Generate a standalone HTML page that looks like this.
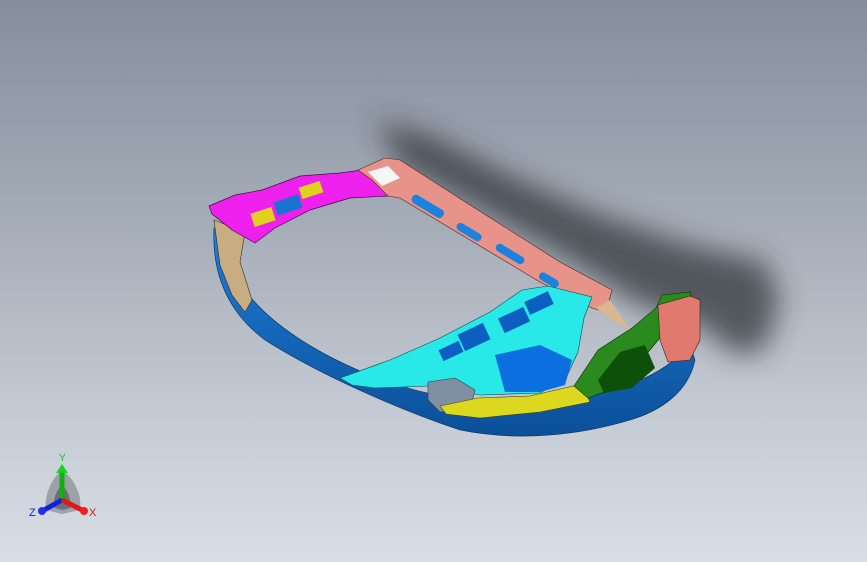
<!DOCTYPE html>
<html><head><style>
html,body{margin:0;padding:0;width:867px;height:562px;overflow:hidden}
body{background:linear-gradient(180deg,#858e9b 0%,#a5adb8 40%,#c6ccd5 75%,#d9dee5 100%)}
svg{position:absolute;left:0;top:0}
</style></head><body>
<svg width="867" height="562" viewBox="0 0 867 562">
<defs>
<filter id="b" x="-20%" y="-50%" width="140%" height="200%"><feGaussianBlur stdDeviation="14"/></filter>
<linearGradient id="bl" x1="0" y1="0" x2="0" y2="1"><stop offset="0" stop-color="#1e7fd8"/><stop offset="1" stop-color="#0b4f99"/></linearGradient>
</defs>
<g filter="url(#b)" fill="#2a2d33" opacity="0.7">
<path d="M375,120 L430,135 L520,180 L600,215 L690,245 L765,262 L780,300 L765,350 L735,355 L700,325 L640,305 L560,255 L480,210 L400,165 Z"/>
</g>
<path d="M214,228 C212,270 225,310 265,340 C320,375 400,410 460,430 C520,442 580,435 630,420 C670,408 690,385 695,360 L690,345 C660,380 600,400 540,402 C470,405 420,395 370,375 C320,355 270,325 245,290 C232,268 228,245 222,228 Z" fill="url(#bl)" stroke="#0a2a55" stroke-width="0.6"/>
<path d="M214,220 L245,232 L240,262 L252,300 L245,312 L232,295 L220,265 Z" fill="#c8ac82" stroke="#3a3020" stroke-width="0.6"/>
<path d="M209,206 L235,195 L262,190 L300,176 L340,173 L362,170 L388,186 L388,196 L350,198 L310,210 L275,228 L255,243 L232,230 L212,214 Z" fill="#ee20ee" stroke="#401040" stroke-width="0.7"/>
<rect x="275" y="198" width="26" height="14" fill="#1a73d0" transform="rotate(-18 288 205)"/>
<rect x="300" y="184" width="22" height="12" fill="#e0d020" transform="rotate(-18 311 190)"/>
<rect x="252" y="210" width="22" height="14" fill="#e0d020" transform="rotate(-18 263 217)"/>
<path d="M358,170 L385,158 L400,160 L470,205 L560,262 L612,290 L606,312 L592,308 L540,282 L470,240 L400,198 L388,196 L372,180 Z" fill="#e8938a" stroke="#4a2420" stroke-width="0.6"/>
<path d="M368,172 L388,166 L400,178 L382,186 Z" fill="#f6f6f6"/>
<rect x="410" y="202" width="36" height="9" rx="4" fill="#1a83e0" transform="rotate(31 428 206)"/>
<rect x="455" y="228" width="28" height="8" rx="4" fill="#1a83e0" transform="rotate(31 469 232)"/>
<rect x="494" y="250" width="32" height="8" rx="4" fill="#1a83e0" transform="rotate(31 510 254)"/>
<rect x="538" y="276" width="22" height="8" rx="4" fill="#1a83e0" transform="rotate(31 549 280)"/>
<path d="M340,378 L390,360 L440,338 L490,312 L522,290 L548,286 L592,297 L584,318 L578,352 L566,378 L540,393 L480,395 L430,386 L375,388 L352,385 Z" fill="#28e8e8" stroke="#104848" stroke-width="0.6"/>
<path d="M495,355 L540,345 L572,360 L565,385 L540,392 L505,392 Z" fill="#0c6fe0"/>
<rect x="460" y="328" width="28" height="18" fill="#0c5fc0" transform="rotate(-25 474 337)"/>
<rect x="500" y="312" width="28" height="16" fill="#0c5fc0" transform="rotate(-25 514 320)"/>
<rect x="526" y="296" width="26" height="14" fill="#0c5fc0" transform="rotate(-25 539 303)"/>
<rect x="440" y="345" width="22" height="12" fill="#0c5fc0" transform="rotate(-25 451 351)"/>
<path d="M428,382 L455,378 L475,390 L470,410 L440,412 L428,400 Z" fill="#8090a4" stroke="#303840" stroke-width="0.6"/>
<path d="M440,406 L478,398 L530,396 L582,384 L590,402 L540,412 L480,418 L446,414 Z" fill="#dcd820" stroke="#404010" stroke-width="0.6"/>
<path d="M574,386 L598,350 L632,328 L656,308 L662,295 L690,292 L696,312 L668,328 L650,350 L628,375 L604,392 L588,398 Z" fill="#2a8a1e" stroke="#0c3008" stroke-width="0.6"/>
<path d="M598,380 L620,352 L645,345 L655,368 L632,388 L604,393 Z" fill="#0d5008"/>
<path d="M658,305 L690,296 L700,300 L700,340 L690,360 L668,362 L660,340 Z" fill="#e07a6e" stroke="#402018" stroke-width="0.6"/>
<path d="M610,300 L630,330 L612,320 L596,308 Z" fill="#d8b88e"/>
<g>
<path d="M62,470 C50,480 44,497 46,510 L62,514 L80,510 C82,497 76,480 62,470 Z" fill="#888c93" opacity="0.7"/>
<path d="M62,485 C55,492 53,500 55,508 L62,510 L70,508 C71,500 69,492 62,485 Z" fill="#555a60" opacity="0.7"/>
<line x1="62" y1="500" x2="62" y2="472" stroke="#10b010" stroke-width="5"/>
<path d="M56,473 L62,464 L68,473 Z" fill="#20d020"/>
<line x1="62" y1="500" x2="44" y2="510" stroke="#1020e0" stroke-width="5"/>
<circle cx="42" cy="511" r="4" fill="#2030f0"/>
<line x1="62" y1="500" x2="82" y2="510" stroke="#e01818" stroke-width="5"/>
<circle cx="84" cy="511" r="4" fill="#f02020"/>
<text x="59" y="461" font-family="Liberation Sans,sans-serif" font-size="10" fill="#10c010">Y</text>
<text x="29" y="516" font-family="Liberation Sans,sans-serif" font-size="11" fill="#1020e0">Z</text>
<text x="89" y="516" font-family="Liberation Sans,sans-serif" font-size="11" fill="#e01010">X</text>
</g>
</svg>
</body></html>
